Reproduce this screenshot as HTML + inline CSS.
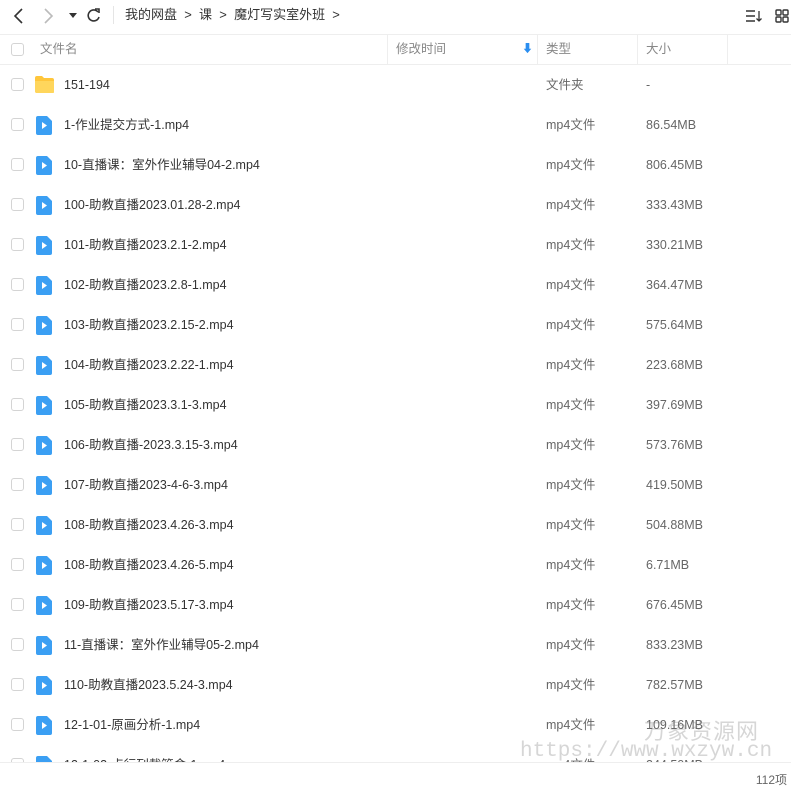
<!DOCTYPE html>
<html><head><meta charset="utf-8"><style>
*{margin:0;padding:0;box-sizing:border-box}
body{width:791px;height:789px;background:#fff;font-family:"Liberation Sans","Noto Sans CJK SC",sans-serif;color:#333;font-size:12px;position:relative;overflow:hidden}
.abs{position:absolute}
.cb{position:absolute;left:11px;width:13px;height:13px;border:1px solid #d4d4d4;border-radius:3px;background:#fff}
.row{position:absolute;left:0;width:791px;height:40px;line-height:40px}
.row .cb{top:13px}
.row .ic{position:absolute;left:36px;top:11px}
.row .nm{position:absolute;left:64px;top:0;font-size:12.5px;color:#333;white-space:nowrap}
.row .tp{position:absolute;left:546px;top:0;color:#666;font-size:12.5px}
.row .sz{position:absolute;left:646px;top:0;color:#666;font-size:12.5px}
.hd{position:absolute;top:35px;height:29px;line-height:29px;color:#888;font-size:12.5px}
.vl{position:absolute;top:35px;height:29px;width:1px;background:#eee}
</style></head><body>
<!-- toolbar -->
<svg class="abs" style="left:12px;top:8px" width="14" height="16"><path d="M10 1 L3 8 L10 15" stroke="#333" stroke-width="1.6" fill="none"/></svg>
<svg class="abs" style="left:42px;top:8px" width="14" height="16"><path d="M3 1 L10 8 L3 15" stroke="#bbb" stroke-width="1.6" fill="none"/></svg>
<svg class="abs" style="left:69px;top:13px" width="8" height="6"><path d="M0 0 L8 0 L4 5Z" fill="#333"/></svg>
<svg class="abs" style="left:86px;top:8px" width="15" height="15"><path d="M12 4 A5.5 5.5 0 1 0 13 9" stroke="#333" stroke-width="1.6" fill="none"/><path d="M9 1 L13 1 L13 5" stroke="#333" stroke-width="1.6" fill="none"/></svg>
<div class="abs" style="left:113px;top:6px;width:1px;height:18px;background:#e5e5e5"></div>
<div class="abs" style="left:125px;top:0;line-height:30px;font-size:13px;color:#333;white-space:nowrap">我的网盘 &nbsp;&gt;&nbsp; 课 &nbsp;&gt;&nbsp; 魔灯写实室外班 &nbsp;&gt;</div>
<svg class="abs" style="left:745px;top:9px" width="18" height="14"><path d="M1 2H10M1 7H10M1 12H10" stroke="#333" stroke-width="1.4"/><path d="M14 2V12M11.5 9.5L14 12L16.5 9.5" stroke="#333" stroke-width="1.3" fill="none"/></svg>
<svg class="abs" style="left:775px;top:9px" width="14" height="14"><rect x="1" y="1" width="5" height="5" rx="1" stroke="#333" stroke-width="1.4" fill="none"/><rect x="8" y="1" width="5" height="5" rx="1" stroke="#333" stroke-width="1.4" fill="none"/><rect x="1" y="8" width="5" height="5" rx="1" stroke="#333" stroke-width="1.4" fill="none"/><rect x="8" y="8" width="5" height="5" rx="1" stroke="#333" stroke-width="1.4" fill="none"/></svg>
<!-- header -->
<div class="abs" style="left:0;top:34px;width:791px;height:1px;background:#eee"></div>
<div class="abs" style="left:0;top:64px;width:791px;height:1px;background:#eee"></div>
<div class="cb" style="top:43px"></div>
<div class="hd" style="left:40px">文件名</div>
<div class="vl" style="left:387px"></div>
<div class="hd" style="left:396px">修改时间</div>
<div class="hd" style="left:522px;color:#2a8ef0;font-size:11px">⬇</div>
<div class="vl" style="left:537px"></div>
<div class="hd" style="left:546px">类型</div>
<div class="vl" style="left:637px"></div>
<div class="hd" style="left:646px">大小</div>
<div class="vl" style="left:727px"></div>
<div id="rows"></div>
<!-- rows -->
<div class="row" style="top:65px"><div class="cb"></div><svg class="ic" style="left:34px;top:10px" width="21" height="19"><path d="M1 3 Q1 1 3 1 L8 1 L10 3 L18 3 Q20 3 20 5 L20 17 Q20 18 18 18 L3 18 Q1 18 1 16Z" fill="#ffc63b"/><path d="M1 6 L20 6 L20 17 Q20 18 18 18 L3 18 Q1 18 1 16Z" fill="#ffd65c"/></svg><div class="nm">151-194</div><div class="tp">文件夹</div><div class="sz">-</div></div>
<script>
const d=[["1-作业提交方式-1.mp4","86.54MB"],["10-直播课：室外作业辅导04-2.mp4","806.45MB"],["100-助教直播2023.01.28-2.mp4","333.43MB"],["101-助教直播2023.2.1-2.mp4","330.21MB"],["102-助教直播2023.2.8-1.mp4","364.47MB"],["103-助教直播2023.2.15-2.mp4","575.64MB"],["104-助教直播2023.2.22-1.mp4","223.68MB"],["105-助教直播2023.3.1-3.mp4","397.69MB"],["106-助教直播-2023.3.15-3.mp4","573.76MB"],["107-助教直播2023-4-6-3.mp4","419.50MB"],["108-助教直播2023.4.26-3.mp4","504.88MB"],["108-助教直播2023.4.26-5.mp4","6.71MB"],["109-助教直播2023.5.17-3.mp4","676.45MB"],["11-直播课：室外作业辅导05-2.mp4","833.23MB"],["110-助教直播2023.5.24-3.mp4","782.57MB"],["12-1-01-原画分析-1.mp4","109.16MB"],["12-1-02-点行列裁管舍-1.mp4","244.50MB"]];
let h="";d.forEach((r,i)=>{h+=`<div class="row" style="top:${105+i*40}px"><div class="cb"></div><svg class="ic" width="16" height="19"><path d="M2 0 L11 0 L16 5 L16 17 Q16 19 14 19 L2 19 Q0 19 0 17 L0 2 Q0 0 2 0Z" fill="#3b9ff3"/><path d="M6 6 L11 9.5 L6 13Z" fill="#fff"/></svg><div class="nm">${r[0]}</div><div class="tp">mp4文件</div><div class="sz">${r[1]}</div></div>`});
document.getElementById("rows").innerHTML=h;
</script>
<!-- footer -->
<div class="abs" style="left:0;top:762px;width:791px;height:27px;background:#fff;border-top:1px solid #eee"></div>
<div class="abs" style="right:4px;top:771px;color:#666;font-size:12px">112项</div>
<div class="abs" style="left:644px;top:714px;font-size:22px;color:rgba(120,120,120,0.3);letter-spacing:1px">万象资源网</div>
<div class="abs" style="left:520px;top:740px;font-size:21px;color:rgba(120,120,120,0.3);font-family:'Liberation Mono',monospace">https://www.wxzyw.cn</div>
</body></html>
